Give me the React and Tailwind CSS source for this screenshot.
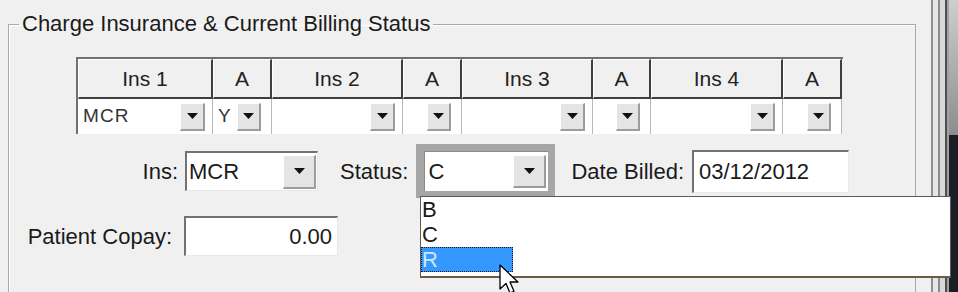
const font = { fontFamily: '"Liberation Sans", Arial, sans-serif' };

// small black down triangle used by all combo buttons
function Arrow() {
  return (
    <svg width="11" height="6" viewBox="0 0 11 6">
      <path d="M0 0 H11 L5.5 6 Z" fill="#111" />
    </svg>
  );
}

function DropButton({ className }) {
  return (
    <div
      className={
        "flex items-center justify-center bg-[#e4e4e4] border-t border-l border-white border-b-2 border-r-2 border-b-[#9c9c9c] border-r-[#9c9c9c] " +
        className
      }
    >
      <Arrow />
    </div>
  );
}

function GridCell({ value, narrow }) {
  return (
    <div className="h-[35px] bg-white border-r border-[#b8b8b8] flex items-center pl-[5px]">
      <span className="flex-1 text-[19px] tracking-[0.06em] text-[#333]">{value}</span>
      <DropButton className={narrow ? "w-[24px] h-[28px] mr-[10px]" : "w-[25px] h-[28px] mr-[7px]"} />
    </div>
  );
}

function HeaderCell({ label }) {
  return (
    <div className="h-[40px] flex items-center justify-center bg-[#f0f0f0] border-t border-l border-white border-r-2 border-b-2 border-r-[#3f3f3f] border-b-[#3f3f3f] text-[21px] text-[#222]">
      {label}
    </div>
  );
}

const columns = [
  { label: "Ins 1", value: "MCR" },
  { label: "A", value: "Y", narrow: true },
  { label: "Ins 2", value: "" },
  { label: "A", value: "", narrow: true },
  { label: "Ins 3", value: "" },
  { label: "A", value: "", narrow: true },
  { label: "Ins 4", value: "" },
  { label: "A", value: "", narrow: true },
];

export default function App() {
  return (
    <div className="relative w-[958px] h-[292px] overflow-hidden bg-[#f0f0f0] flex text-[#1a1a1a]" style={font}>
      <div className="w-[931px] pt-[12px]">
        <fieldset className="ml-[8px] w-[908px] h-[320px] border border-[#a9a9a9] pl-[10px] shadow-[inset_1px_1px_0_#ffffff]">
          <legend className="px-[3px] text-[22px] leading-[24px] text-[#1a1a1a]">
            Charge Insurance &amp; Current Billing Status
          </legend>

          {/* insurance grid */}
          <div className="mt-[21px] ml-[57px] w-[767px] border-t-2 border-l-2 border-[#707070]">
            <div className="grid grid-cols-[135px_59px_131px_59px_131px_58px_132px_59px]">
              {columns.map((c, i) => (
                <HeaderCell key={"h" + i} label={c.label} />
              ))}
              {columns.map((c, i) => (
                <GridCell key={"d" + i} value={c.value} narrow={c.narrow} />
              ))}
            </div>
          </div>

          {/* ins / status / date row */}
          <div className="mt-[10px] flex items-center">
            <div className="w-[159px] text-right text-[22px]">Ins:</div>
            <div className="ml-[7px] w-[133px] h-[40px] bg-white border-t-2 border-l-2 border-[#727272] border-b border-r border-b-[#e8e8e8] border-r-[#e8e8e8] flex items-center">
              <span className="flex-1 pl-[2px] text-[22px]">MCR</span>
              <DropButton className="w-[33px] h-[34px] mr-[1px]" />
            </div>
            <div className="ml-[22px] text-[22px]">Status:</div>
            <div className="ml-[8px] w-[139px] h-[54px] bg-[#a6a6a6] pl-[8px] pr-[7px] py-[7px]">
              <div className="h-full bg-white flex items-center border-t border-l border-[#8a8a8a]">
                <span className="flex-1 pl-[3px] text-[22px]">C</span>
                <DropButton className="w-[33px] h-[33px] mr-[2px]" />
              </div>
            </div>
            <div className="ml-[16px] text-[22px]">Date Billed:</div>
            <div className="ml-[8px] w-[157px] h-[43px] bg-white border-t-2 border-l-2 border-[#727272] border-b border-r border-b-[#e8e8e8] border-r-[#e8e8e8] flex items-center pl-[5px] text-[22px]">
              03/12/2012
            </div>
          </div>

          {/* copay row */}
          <div className="mt-[18px] flex items-center">
            <div className="w-[153px] text-right text-[22px]">Patient Copay:</div>
            <div className="ml-[12px] w-[154px] h-[40px] bg-white border-t-2 border-l-2 border-[#727272] border-b border-r border-b-[#e8e8e8] border-r-[#e8e8e8] flex items-center justify-end pr-[5px] text-[22px]">
              0.00
            </div>
          </div>
        </fieldset>
      </div>

      {/* window frame edge */}
      <div className="w-[2px] bg-[#8e8e8e]" />
      <div className="w-[5px] bg-[#e6e6e6]" />
      <div className="w-[2px] bg-[#8a8a8a]" />
      <div className="w-[5px] bg-[#d8d8d8]" />
      <div className="w-[2px] bg-[#4e4e4e]" />
      <div className="w-[2px] bg-[#a0a0a0]" />
      <div className="w-[9px] flex flex-col">
        <div className="h-[135px] bg-gradient-to-b from-[#cfcfcf] to-[#8d8d8d]" />
        <div className="flex-1 bg-[#1b1e22]" />
      </div>

      {/* open status dropdown list */}
      <div className="absolute left-[420px] top-[196px] w-[531px] h-[82px] bg-white border border-[#5a5a5a] border-b-[#6b5a45] border-b-2 border-dashed-none text-[22px] leading-[25px]">
        <div className="pl-[1px] h-[25px]">B</div>
        <div className="pl-[1px] h-[25px]">C</div>
        <div className="w-[92px] h-[25px] pl-[1px] bg-[#3399ff] text-[#cfe6ff] outline outline-1 outline-dotted outline-[#1a1a1a] -outline-offset-1">
          R
        </div>
      </div>

      {/* mouse cursor */}
      <svg className="absolute left-[499px] top-[264px]" width="22" height="32" viewBox="0 0 22 32">
        <path d="M1 1 L1 25 L7 19.5 L11 29 L15 27.3 L11 18 L19 18 Z" fill="#fff" stroke="#000" strokeWidth="1.3" strokeLinejoin="round" />
      </svg>
    </div>
  );
}
